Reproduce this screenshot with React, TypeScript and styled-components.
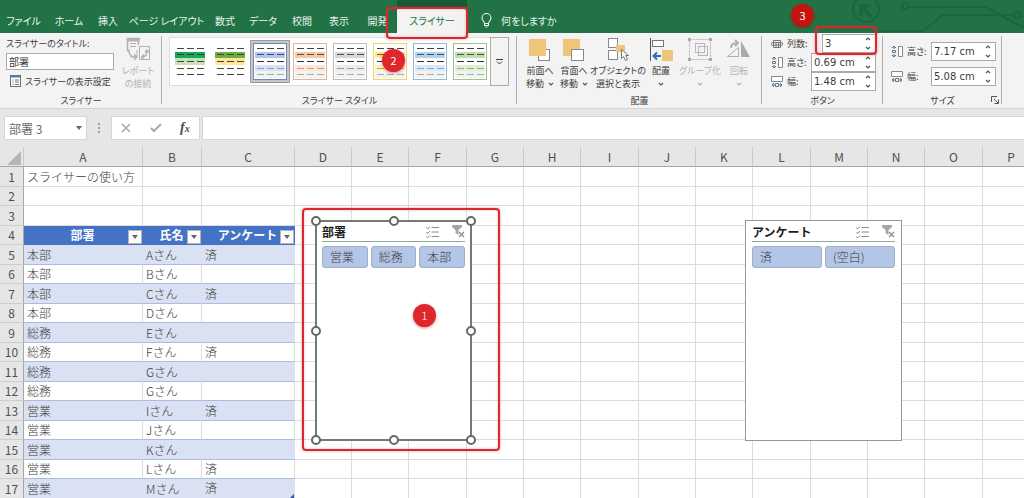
import React from "react";
import styled, { createGlobalStyle, css } from "styled-components";

const GlobalStyle = createGlobalStyle`
  * { box-sizing: border-box; }
  body {
    margin: 0;
    font-family: "Noto Sans CJK JP", sans-serif;
    font-size: 10px;
    color: #3c3c3c;
    background: #fff;
  }
  button, input { font: inherit; color: inherit; margin: 0; padding: 0; }
  button { background: none; border: 0; }
  svg { flex: none; }
`;

const Window = styled.div`
  display: flex;
  flex-direction: column;
  height: 100vh;
  overflow: hidden;
`;

/* ---------- title and tabs ---------- */

const TabBar = styled.header`
  position: relative;
  display: flex;
  flex: none;
  height: 33px;
  background: #217346;
  color: #eaf4ee;
  font-feature-settings: "palt";
`;

const Tabs = styled.nav`
  display: flex;
  padding-top: 8px;
`;

const Tab = styled.button<{ $width: number; $active?: boolean }>`
  position: relative;
  width: ${(p) => p.$width}px;
  height: 25px;
  line-height: 24px;
  white-space: nowrap;
  ${(p) =>
    p.$active &&
    css`
      background: #f3f3f3;
      color: #217346;
      box-shadow: 0 -8px 0 #185c37;
    `}
`;

const TellMe = styled.button`
  display: flex;
  align-items: center;
  gap: 9px;
  margin-left: 14px;
  padding-top: 8px;
  white-space: nowrap;
`;

const Circuit = styled.svg`
  position: absolute;
  right: 0;
  top: 0;
`;

const Callout = styled.span<{ $inset: string }>`
  position: absolute;
  inset: ${(p) => p.$inset};
  z-index: 3;
  border: 2px solid #d8292f;
  border-radius: 4px;
  box-shadow: 0 0 3px rgba(200, 40, 40, 0.45), inset 0 0 3px rgba(200, 40, 40, 0.3);
  pointer-events: none;
`;

const Badge = styled.span<{ $left: number; $top: number; $dark?: boolean }>`
  position: absolute;
  left: ${(p) => p.$left}px;
  top: ${(p) => p.$top}px;
  z-index: 4;
  width: 23px;
  height: 23px;
  border-radius: 50%;
  background: ${(p) => (p.$dark ? "#c5130f" : "#e0262b")};
  box-shadow: 0 1px 3px rgba(150, 0, 0, 0.4);
  color: #fff;
  font-size: 11px;
  line-height: 22px;
  text-align: center;
`;

/* ---------- ribbon ---------- */

const Ribbon = styled.section`
  display: flex;
  flex: none;
  height: 76px;
  background: #f3f3f3;
  border-bottom: 1px solid #d4d4d4;
  font-size: 9px;
  font-feature-settings: "palt";
`;

const Group = styled.div<{ $width: number }>`
  position: relative;
  display: flex;
  flex: none;
  flex-direction: column;
  width: ${(p) => p.$width}px;
  &::after {
    content: "";
    position: absolute;
    right: 0;
    top: 3px;
    bottom: 4px;
    width: 1px;
    background: #b0b0b0;
  }
`;

const GroupBody = styled.div`
  display: flex;
  height: 60px;
`;

const GroupLabel = styled.div`
  height: 15px;
  line-height: 15px;
  text-align: center;
`;

const CaptionPane = styled.div`
  display: flex;
  flex-direction: column;
  width: 108px;
  margin: 2px 3px 0 6px;
  label { line-height: 18px; white-space: nowrap; }
  input {
    height: 17px;
    padding: 0 2px;
    border: 1px solid #ababab;
    background: #fff;
    font-size: 10px;
  }
`;

const SettingsButton = styled.button`
  display: flex;
  align-items: center;
  gap: 4px;
  height: 20px;
  margin-top: 1px;
  padding-left: 4px;
  white-space: nowrap;
`;

const BigButton = styled.button<{ $width: number; $muted?: boolean }>`
  display: flex;
  flex: none;
  flex-direction: column;
  align-items: center;
  width: ${(p) => p.$width}px;
  padding-top: 4px;
  line-height: 13px;
  white-space: nowrap;
  color: ${(p) => (p.$muted ? "#b3b3b3" : "inherit")};
`;

const BigLabel = styled.span`
  display: flex;
  flex-direction: column;
  align-items: center;
  margin-top: 3px;
`;

const LabelLine = styled.span`
  display: flex;
  align-items: center;
  gap: 4px;
  height: 13px;
`;

const Gallery = styled.div`
  position: relative;
  display: flex;
  align-items: center;
  height: 49px;
  margin: 4px 0 0 7px;
  background: #fff;
  border: 1px solid #dcdcdc;
`;

const StyleTile = styled.button<{ $selected?: boolean }>`
  display: flex;
  align-items: center;
  justify-content: center;
  width: 40px;
  height: 43px;
  border-radius: 1px;
  background: ${(p) => (p.$selected ? "#c4c6c9" : "transparent")};
  box-shadow: ${(p) => (p.$selected ? "inset 0 0 0 1px #9a9a9a" : "none")};
`;

const Swatch = styled.span<{ $edge: string; $fill: string }>`
  display: flex;
  flex-direction: column;
  width: 34px;
  height: 37px;
  padding: 1px;
  border: 1px solid ${(p) => p.$edge};
  background: ${(p) => p.$fill};
`;

const SwatchRow = styled.span<{ $bg: string; $ink: string }>`
  display: flex;
  flex: 1;
  align-items: center;
  justify-content: space-around;
  background: ${(p) => p.$bg};
  i { width: 7px; height: 1px; background: ${(p) => p.$ink}; }
`;

const GalleryMore = styled.button`
  display: flex;
  align-items: center;
  justify-content: center;
  width: 19px;
  height: 49px;
  margin-right: -1px;
  border: 1px solid #ababab;
  background: #f3f3f3;
`;

const ArrangeButtons = styled(GroupBody)`
  padding-left: 6px;
`;

const Fields = styled.div<{ $roomy?: boolean }>`
  display: flex;
  flex-direction: column;
  justify-content: ${(p) => (p.$roomy ? "space-evenly" : "flex-start")};
  width: 100%;
  padding: ${(p) => (p.$roomy ? "3px 6px 1px 8px" : "1px 7px 0 9px")};
`;

const Field = styled.div`
  position: relative;
  display: flex;
  align-items: center;
  height: 19px;
  gap: 4px;
  label { flex: 1; min-width: 0; white-space: nowrap; }
`;

const Spin = styled.span<{ $width: number }>`
  display: flex;
  flex: none;
  width: ${(p) => p.$width}px;
  height: 19px;
  border: 1px solid #ababab;
  background: #fff;
  input {
    flex: 1;
    min-width: 0;
    padding-left: 2px;
    border: 0;
    background: none;
    font-family: "DejaVu Sans", sans-serif;
    font-size: 10px;
  }
`;

const Arrows = styled.span`
  display: flex;
  flex-direction: column;
  width: 14px;
  button {
    display: flex;
    flex: 1;
    align-items: center;
    justify-content: center;
  }
`;

const Launcher = styled.button`
  position: absolute;
  right: 3px;
  bottom: 1px;
`;

/* ---------- formula bar ---------- */

const FormulaBar = styled.div`
  display: flex;
  flex: none;
  align-items: center;
  height: 38px;
  padding: 0 0 0 4px;
  background: #e6e6e6;
`;

const NameBox = styled.div`
  display: flex;
  align-items: center;
  width: 83px;
  height: 24px;
  padding: 0 4px;
  background: #fff;
  border: 1px solid #d6d6d6;
  color: #6a6a6a;
  input { flex: 1; min-width: 0; border: 0; font-size: 12px; background: none; }
`;

const Grip = styled.span`
  width: 2px;
  height: 10px;
  margin: 0 11px;
  border-left: 2px dotted #a0a0a0;
`;

const FormulaTools = styled.div`
  display: flex;
  align-items: center;
  justify-content: space-around;
  width: 89px;
  height: 24px;
  margin-right: 2px;
  background: #fff;
  border: 1px solid #d6d6d6;
`;

const Fx = styled.button`
  color: #4c4c4c;
  font-family: "Liberation Serif", serif;
  font-size: 14px;
  font-style: italic;
  font-weight: 700;
  sub { font-size: 10px; vertical-align: baseline; }
`;

const FormulaInput = styled.input`
  flex: 1;
  height: 24px;
  border: 1px solid #d6d6d6;
  border-right: 0;
  background: #fff;
`;

/* ---------- sheet ---------- */

const Sheet = styled.main`
  position: relative;
  flex: 1;
  min-height: 0;
  overflow: hidden;
  font-weight: 300;
`;

const Grid = styled.table`
  width: 1040px;
  table-layout: fixed;
  border-collapse: separate;
  border-spacing: 0;
  font-size: 12px;
  line-height: 18px;
`;

const ColHead = styled.th`
  height: 20px;
  padding: 0;
  border-right: 1px solid #c9c9c9;
  border-bottom: 1px solid #a6a6a6;
  background: #e6e6e6;
  color: #505050;
  font-weight: 400;
`;

const RowHead = styled.th`
  padding: 0;
  border-right: 1px solid #a6a6a6;
  border-bottom: 1px solid #cdcdcd;
  background: #e6e6e6;
  color: #505050;
  font-weight: 400;
`;

const Corner = styled.td`
  padding: 3px 2px 0 7px;
  border-right: 1px solid #c9c9c9;
  border-bottom: 1px solid #a6a6a6;
  background: #e6e6e6;
  svg { display: block; }
`;

const Row = styled.tr`
  height: 20px;
  &:nth-child(even) { height: 19px; }
`;

const Cell = styled.td<{ $kind?: "plain" | "band" | "row" }>`
  padding: 0 0 0 3px;
  border-right: 1px solid #dadcdf;
  border-bottom: 1px solid #dadcdf;
  white-space: nowrap;
  ${(p) =>
    p.$kind === "band" &&
    css`
      background: #d9e1f2;
      border-right-color: #d9e1f2;
      border-bottom-color: #a9bde0;
    `}
  ${(p) => p.$kind === "row" && css`border-bottom-color: #a9bde0;`}
`;

const TableHead = styled.th`
  padding: 0;
  background: #4472c4;
  border-bottom: 1px solid #4472c4;
  color: #fff;
  font-weight: 700;
`;

const HeadInner = styled.div`
  display: flex;
  align-items: center;
  height: 18px;
  span { flex: 1; text-align: center; }
`;

const FilterButton = styled.button`
  display: flex;
  flex: none;
  align-items: center;
  justify-content: center;
  width: 14px;
  height: 14px;
  margin: 3px 1px 0 -13px;
  border: 1px solid #b5b5b5;
  background: #fcfcfc;
`;

const ResizeMark = styled.span`
  float: right;
  width: 4px;
  height: 4px;
  margin-top: 15px;
  border: 2px solid transparent;
  border-right-color: #2f55a4;
  border-bottom-color: #2f55a4;
`;

/* ---------- slicers ---------- */

const SlicerBox = styled.section<{ $left: number; $selected?: boolean }>`
  position: absolute;
  left: ${(p) => p.$left}px;
  top: 73px;
  z-index: 1;
  width: 157px;
  height: 221px;
  padding: ${(p) => (p.$selected ? "0 5px" : "1px 6px")};
  background: #fff;
  border: ${(p) => (p.$selected ? "2px solid #71797d" : "1px solid #82a0a4")};
`;

const SlicerHead = styled.div`
  display: flex;
  align-items: center;
  height: 20px;
  border-bottom: 1px solid #8fa6aa;
  gap: 13px;
  h2 { flex: 1; margin: 0; font-size: 12px; line-height: 18px; color: #1c1c1c; }
  button, svg { display: block; }
`;

const SlicerItems = styled.div`
  display: flex;
  gap: 3px;
  margin-top: 4px;
`;

const SlicerItem = styled.button`
  flex: 1;
  height: 22px;
  padding-left: 7px;
  border: 1px solid #a3acc0;
  border-radius: 3px;
  background: #b4c6e7;
  font-size: 12px;
  line-height: 18px;
  text-align: left;
`;

const HandleFrame = styled.div`
  position: absolute;
  inset: -1px;
  pointer-events: none;
`;

const Handle = styled.span<{ $x: number; $y: number }>`
  position: absolute;
  left: ${(p) => p.$x}%;
  top: ${(p) => p.$y}%;
  width: 10px;
  height: 10px;
  margin: -5px;
  border: 2px solid #666;
  border-radius: 50%;
  background: #fff;
`;

/* ---------- icons ---------- */

const Chevron = ({ up = false, color = "#555" }: { up?: boolean; color?: string }) => (
  <svg width="6" height="4" viewBox="0 0 6 4" fill="none" stroke={color} strokeWidth="1.2">
    <path d={up ? "M1 3 3 1 5 3" : "M1 1 3 3 5 1"} />
  </svg>
);

const Triangle = ({ color = "#666" }: { color?: string }) => (
  <svg width="6" height="4" viewBox="0 0 6 4"><path d="M0 0H6L3 4z" fill={color} /></svg>
);

const BulbIcon = () => (
  <svg width="11" height="15" viewBox="0 0 11 15" fill="none" stroke="#eaf4ee" strokeWidth="1.1">
    <path d="M3.5 10.5C3.5 8.3 1 7.6 1 5a4.5 4.5 0 0 1 9 0c0 2.6-2.5 3.3-2.5 5.5zM3.5 10.5v2h4v-2M4.5 14h2" />
  </svg>
);

const SettingsIcon = () => (
  <svg width="11" height="12" viewBox="0 0 11 12" fill="none" stroke="#707070">
    <rect x=".5" y=".5" width="10" height="11" fill="#fff" />
    <path d="M1 1.5h9" stroke="#4d7fa8" strokeWidth="2" />
    <path d="M2.5 5h1M2.5 7h1M2.5 9.5h1" stroke="#2f75b5" />
    <path d="M5 5h4M5 7h4M5 9.5h4" />
  </svg>
);

const ReportIcon = () => (
  <svg width="25" height="24" viewBox="0 0 25 24" fill="none" stroke="#b5adb8">
    <path d="M1 1.5h13M12.5 8V1M1.5 1v12.5H4" strokeWidth="1.5" />
    <path d="M1 2h12v2H1z" fill="#bbb4be" />
    <path d="M4 6.5h6M4 9.5h6" />
    <path d="M13.5 9.5h10v13h-10zM11 13v7M4 20h6" />
    <path d="M16 20c4 0 5-3 5-7m-2 2.5 2-2.5 2 2.5M18 17.5 15.5 20l2.5 2.5" strokeWidth="1.3" />
    <path d="M3 14c0 5 3 6 7 6M8 17l3 3-3 3" strokeWidth="1.3" />
  </svg>
);

const ForwardIcon = () => (
  <svg width="24" height="24" viewBox="0 0 24 24">
    <rect x="10.5" y="12.5" width="11" height="11" fill="#fff" stroke="#888" />
    <rect x="1" y="2" width="17" height="17" fill="#eec579" />
  </svg>
);

const BackwardIcon = () => (
  <svg width="24" height="24" viewBox="0 0 24 24">
    <rect x="1" y="2" width="17" height="17" fill="#eec579" />
    <rect x="9.5" y="12.5" width="12" height="11" fill="#fff" stroke="#888" />
  </svg>
);

const SelectionIcon = () => (
  <svg width="24" height="24" viewBox="0 0 24 24">
    <g fill="#fff" stroke="#888">
      <rect x="2.5" y="1.5" width="9" height="9" />
      <rect x="2.5" y="13.5" width="9" height="9" />
    </g>
    <path d="M10 8h9v7h-9z" fill="#eec579" />
    <path d="M15.5 12.5v9l2-2 2 4 2-1-2-4h3z" fill="#fff" stroke="#777" />
  </svg>
);

const AlignIcon = () => (
  <svg width="24" height="24" viewBox="0 0 24 24">
    <path d="M1.5 1v23" stroke="#555" />
    <rect x="3.5" y="3.5" width="11" height="6" fill="#fff" stroke="#777" />
    <rect x="13" y="13" width="11" height="11" fill="#eec579" />
    <path d="M12 19H5M8 15.5 4.5 19 8 22.5" fill="none" stroke="#2f6fb5" strokeWidth="2" />
  </svg>
);

const GroupIcon = () => (
  <svg width="24" height="24" viewBox="0 0 24 24" fill="none" stroke="#bcb3c0">
    <rect x="1.5" y="2.5" width="21" height="20" strokeDasharray="2 1" />
    <rect x="7.5" y="6.5" width="9" height="9" />
    <rect x="10.5" y="9.5" width="9" height="9" />
    <path d="M0 1h3v3H0zM21 1h3v3h-3zM0 21h3v3H0zM21 21h3v3h-3z" fill="#aaa" stroke="none" />
  </svg>
);

const RotateIcon = () => (
  <svg width="24" height="24" viewBox="0 0 24 24" fill="none" stroke="#b0b0b0">
    <path d="M.5 19.500h11v-9z" />
    <path d="M14 4v16h9z" fill="#aaa" stroke="none" />
    <path d="M4 11c0-4 2-5 6-5M8 3l3 3-3 3" strokeWidth="2" />
  </svg>
);

const ColumnsIcon = () => (
  <svg width="12" height="12" viewBox="0 0 12 12" fill="none" stroke="#777">
    <path d="M2.5 2.5h7v7h-7zM2.5 4.5h7M2.5 7h7M5 4v5M7.5 4v5" />
    <path d="M1.5 4 .5 6l1 2M10.5 4l1 2-1 2" />
  </svg>
);

const HeightIcon = () => (
  <svg width="12" height="13" viewBox="0 0 12 13" fill="none">
    <path d="M7.5 1.500h4v10h-4z" fill="#fff" stroke="#888" />
    <path d="M1 3l2-2 2 2M1 10l2 2 2-2M3 1v3M3 9v3" stroke="#3f76a8" />
    <path d="M1.5 5.500h3v2h-3z" stroke="#777" />
  </svg>
);

const WidthIcon = () => (
  <svg width="12" height="12" viewBox="0 0 12 12" fill="none">
    <path d="M.5.500h11v5H.5z" fill="#fff" stroke="#888" />
    <path d="M3 7 1 9l2 2M9 7l2 2-2 2M1 9h3M8 9h3" stroke="#3f76a8" />
    <path d="M4.500 7.500h3v3h-3z" stroke="#777" />
  </svg>
);

const MultiSelectIcon = () => (
  <svg width="13" height="12" viewBox="0 0 13 12" fill="none" stroke="#8c8c8c">
    <path d="M5.5 1.500H13M5.500 6H13M5.500 10.500H13" />
    <path d="m.5 1.500 1 1.500L4 .500M.5 6l1 1.500L4 5M.5 10.500 1.500 12 4 9.500" />
  </svg>
);

const ClearFilterIcon = () => (
  <svg width="13" height="13" viewBox="0 0 13 13">
    <path d="M0 0h10v2L6.500 5v5l-3-2V5L0 2z" fill="#a6a6a6" />
    <path d="m7 7 5 5M12 7l-5 5" stroke="#8c8c8c" strokeWidth="1.3" />
  </svg>
);

/* ---------- data ---------- */

const tabs: [string, number][] = [
  ["ファイル", 47], ["ホーム", 44], ["挿入", 34], ["ページ レイアウト", 83], ["数式", 34],
  ["データ", 42], ["校閲", 36], ["表示", 38], ["開発", 39],
];

type Look = { edge: string; fill: string; rows: [string, string][] };

const tinted = (edge: string, strong: string, ink: string, light: string, soft: string): Look => ({
  edge,
  fill: "#fff",
  rows: [["#fff", "#444"], [strong, ink], ["#fff", "#333"], [light, soft], ["#f2f2f2", "#aaa"]],
});

const looks: Look[] = [
  { edge: "transparent", fill: "#fff", rows: [["#fff", "#444"], ["#1ca55a", "#174d2d"], ["#c6e3b8", "#444"], ["#fff", "#444"], ["#fff", "#444"]] },
  { edge: "transparent", fill: "#fff", rows: [["#fff", "#444"], ["#70ad47", "#33501f"], ["#ffe699", "#444"], ["#fff", "#444"], ["#fff", "#444"]] },
  tinted("#7089b5", "#b4c6e7", "#2f4a86", "#d9e1f2", "#8ea0c0"),
  tinted("#dfb394", "#f3c9ae", "#8a3c10", "#fae6da", "#d99a76"),
  tinted("#bdbdbd", "#d6d6d6", "#4d4d4d", "#ececec", "#999"),
  tinted("#edd56b", "#ffe28a", "#846200", "#fff2c8", "#c9a63c"),
  tinted("#92b8d8", "#b5d2ea", "#235780", "#dbeaf6", "#88a9c4"),
  tinted("#9ac484", "#c0dcb0", "#36602a", "#e0efd8", "#93b381"),
];

const columns = "ABCDEFGHIJKLMNOP".split("");
const fixedWidths = [119, 59, 93];
const gridWidths = [57, 57, 58];

const people: string[][] = [
  ["本部", "Aさん", "済"], ["本部", "Bさん", ""], ["本部", "Cさん", "済"], ["本部", "Dさん", ""],
  ["総務", "Eさん", ""], ["総務", "Fさん", "済"], ["総務", "Gさん", ""], ["総務", "Gさん", ""],
  ["営業", "Iさん", "済"], ["営業", "Jさん", ""], ["営業", "Kさん", ""], ["営業", "Lさん", "済"],
  ["営業", "Mさん", "済"],
];

const handles = [[0, 0], [50, 0], [100, 0], [0, 50], [100, 50], [0, 100], [50, 100], [100, 100]];

/* ---------- parts ---------- */

function RibbonButton(props: {
  width: number; icon: React.ReactNode; lines: string[]; menu?: boolean; muted?: boolean;
}) {
  const { width, icon, lines, menu, muted } = props;
  const arrow = <Chevron color={muted ? "#b3b3b3" : "#555"} />;
  return (
    <BigButton $width={width} $muted={muted}>
      {icon}
      <BigLabel>
        <LabelLine>{lines[0]}</LabelLine>
        <LabelLine>{lines[1]}{menu && arrow}</LabelLine>
      </BigLabel>
    </BigButton>
  );
}

function SpinField(props: {
  id: string; icon: React.ReactNode; label: string; value: string; width: number; children?: React.ReactNode;
}) {
  return (
    <Field>
      {props.icon}
      <label htmlFor={props.id}>{props.label}</label>
      <Spin $width={props.width}>
        <input id={props.id} defaultValue={props.value} />
        <Arrows>
          <button aria-label="増やす"><Chevron up /></button>
          <button aria-label="減らす"><Chevron /></button>
        </Arrows>
      </Spin>
      {props.children}
    </Field>
  );
}

function Slicer(props: {
  title: string; items: string[]; left: number; selected?: boolean; children?: React.ReactNode;
}) {
  return (
    <SlicerBox $left={props.left} $selected={props.selected}>
      <SlicerHead>
        <h2>{props.title}</h2>
        <button aria-label="複数選択"><MultiSelectIcon /></button>
        <button aria-label="フィルターのクリア"><ClearFilterIcon /></button>
      </SlicerHead>
      <SlicerItems>
        {props.items.map((item) => <SlicerItem key={item}>{item}</SlicerItem>)}
      </SlicerItems>
      {props.selected && (
        <HandleFrame>
          {handles.map(([x, y]) => <Handle key={`${x}-${y}`} $x={x} $y={y} />)}
        </HandleFrame>
      )}
      {props.children}
    </SlicerBox>
  );
}

const blanks = (from: number) => columns.slice(from).map((c) => <Cell key={c} />);

export default function App() {
  return (
    <Window>
      <GlobalStyle />
      <TabBar>
        <Circuit width="180" height="33" viewBox="0 0 180 33" fill="none" stroke="#1c653d" strokeWidth="2">
          <circle cx="22" cy="9" r="13" />
          <path d="M28 17 18 7M17 16V6h10" strokeWidth="3" />
          <circle cx="61" cy="6" r="3" />
          <path d="M64 7h78l38 21M36 31h43l20-16h70" />
          <circle cx="173" cy="15" r="3" />
        </Circuit>
        <Tabs>
          {tabs.map(([name, width]) => <Tab key={name} $width={width}>{name}</Tab>)}
          <Tab $width={70} $active>
            スライサー
            <Callout $inset="-1px -1px -6px -11px" />
          </Tab>
        </Tabs>
        <TellMe><BulbIcon />何をしますか</TellMe>
        <Badge $left={791} $top={4} $dark>3</Badge>
      </TabBar>

      <Ribbon>
        <Group $width={162}>
          <GroupBody>
            <CaptionPane>
              <label htmlFor="caption">スライサーのタイトル:</label>
              <input id="caption" defaultValue="部署" />
              <SettingsButton><SettingsIcon />スライサーの表示設定</SettingsButton>
            </CaptionPane>
            <RibbonButton width={42} icon={<ReportIcon />} lines={["レポート", "の接続"]} muted />
          </GroupBody>
          <GroupLabel>スライサー</GroupLabel>
        </Group>

        <Group $width={355}>
          <GroupBody>
            <Gallery>
              {looks.map((look, i) => (
                <StyleTile key={i} $selected={i === 2} aria-label={`スタイル ${i + 1}`}>
                  <Swatch $edge={look.edge} $fill={look.fill}>
                    {look.rows.map(([bg, ink], r) => (
                      <SwatchRow key={r} $bg={bg} $ink={ink}><i /><i /><i /></SwatchRow>
                    ))}
                  </Swatch>
                </StyleTile>
              ))}
              <GalleryMore aria-label="その他">
                <svg width="7" height="6" viewBox="0 0 7 6" fill="none" stroke="#444">
                  <path d="M0 .5h7M1 2.500l2.500 2.500L6 2.500" />
                </svg>
              </GalleryMore>
              <Badge $left={212} $top={11}>2</Badge>
            </Gallery>
          </GroupBody>
          <GroupLabel>スライサー スタイル</GroupLabel>
        </Group>

        <Group $width={245}>
          <ArrangeButtons>
            <RibbonButton width={34} icon={<ForwardIcon />} lines={["前面へ", "移動"]} menu />
            <RibbonButton width={34} icon={<BackwardIcon />} lines={["背面へ", "移動"]} menu />
            <RibbonButton width={54} icon={<SelectionIcon />} lines={["オブジェクトの", "選択と表示"]} />
            <RibbonButton width={32} icon={<AlignIcon />} lines={["配置", ""]} menu />
            <RibbonButton width={46} icon={<GroupIcon />} lines={["グループ化", ""]} menu muted />
            <RibbonButton width={32} icon={<RotateIcon />} lines={["回転", ""]} menu muted />
          </ArrangeButtons>
          <GroupLabel>配置</GroupLabel>
        </Group>

        <Group $width={121}>
          <GroupBody>
            <Fields>
              <SpinField id="cols" icon={<ColumnsIcon />} label="列数:" value="3" width={54}>
                <Callout $inset="-8px -1px -2px 44px" />
              </SpinField>
              <SpinField id="bh" icon={<HeightIcon />} label="高さ:" value="0.69 cm" width={65} />
              <SpinField id="bw" icon={<WidthIcon />} label="幅:" value="1.48 cm" width={65} />
            </Fields>
          </GroupBody>
          <GroupLabel>ボタン</GroupLabel>
        </Group>

        <Group $width={119}>
          <GroupBody>
            <Fields $roomy>
              <SpinField id="sh" icon={<HeightIcon />} label="高さ:" value="7.17 cm" width={65} />
              <SpinField id="sw" icon={<WidthIcon />} label="幅:" value="5.08 cm" width={65} />
            </Fields>
          </GroupBody>
          <GroupLabel>サイズ</GroupLabel>
          <Launcher aria-label="サイズの詳細">
            <svg width="8" height="8" viewBox="0 0 8 8" fill="none" stroke="#555">
              <path d="M.5 6V.5H6M3 3l4 4M7.500 3.500v4h-4" />
            </svg>
          </Launcher>
        </Group>
      </Ribbon>

      <FormulaBar>
        <NameBox>
          <input aria-label="名前ボックス" defaultValue="部署 3" />
          <Triangle />
        </NameBox>
        <Grip />
        <FormulaTools>
          <button aria-label="キャンセル">
            <svg width="10" height="10" viewBox="0 0 10 10" stroke="#aaa" strokeWidth="1.5"><path d="m1 1 8 8M9 1 1 9" /></svg>
          </button>
          <button aria-label="入力">
            <svg width="12" height="10" viewBox="0 0 12 10" fill="none" stroke="#aaa" strokeWidth="2"><path d="m1 5 3 3 7-7" /></svg>
          </button>
          <Fx aria-label="関数の挿入">f<sub>x</sub></Fx>
        </FormulaTools>
        <FormulaInput aria-label="数式バー" />
      </FormulaBar>

      <Sheet>
        <Grid>
          <colgroup>
            <col width={24} />
            {columns.map((c, i) => <col key={c} width={i < 3 ? fixedWidths[i] : gridWidths[(i - 3) % 3]} />)}
          </colgroup>
          <thead>
            <tr>
              <Corner>
                <svg width="14" height="14" viewBox="0 0 14 14"><path d="M14 0v14H0z" fill="#b5b5b5" /></svg>
              </Corner>
              {columns.map((c) => <ColHead key={c} scope="col">{c}</ColHead>)}
            </tr>
          </thead>
          <tbody>
            <Row><RowHead scope="row">1</RowHead><Cell>スライサーの使い方</Cell>{blanks(1)}</Row>
            <Row><RowHead scope="row">2</RowHead>{blanks(0)}</Row>
            <Row><RowHead scope="row">3</RowHead>{blanks(0)}</Row>
            <Row>
              <RowHead scope="row">4</RowHead>
              {["部署", "氏名", "アンケート"].map((name) => (
                <TableHead key={name} scope="col">
                  <HeadInner>
                    <span>{name}</span>
                    <FilterButton aria-label={`${name}のフィルター`}><Triangle /></FilterButton>
                  </HeadInner>
                </TableHead>
              ))}
              {blanks(3)}
            </Row>
            {people.map((person, i) => (
              <Row key={i}>
                <RowHead scope="row">{i + 5}</RowHead>
                {person.map((text, c) => (
                  <Cell key={c} $kind={i % 2 ? "row" : "band"}>
                    {text}
                    {i === people.length - 1 && c === 2 && <ResizeMark />}
                  </Cell>
                ))}
                {blanks(3)}
              </Row>
            ))}
          </tbody>
        </Grid>

        <Slicer title="部署" items={["営業", "総務", "本部"]} left={315} selected>
          <Callout $inset="-14px -30px -12px -15px" />
          <Badge $left={96} $top={82}>1</Badge>
        </Slicer>
        <Slicer title="アンケート" items={["済", "(空白)"]} left={745} />
      </Sheet>
    </Window>
  );
}
